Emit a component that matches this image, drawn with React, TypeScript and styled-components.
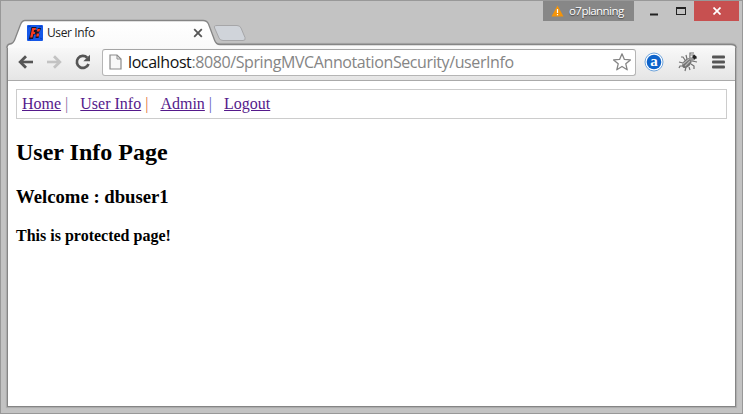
import React from "react";
import styled, { createGlobalStyle } from "styled-components";

const GlobalStyle = createGlobalStyle`
  * { box-sizing: border-box; }
  html, body { margin: 0; overflow: hidden; }
`;

const Window = styled.div`
  width: 743px;
  height: 414px;
  display: flex;
  flex-direction: column;
  background: #c3c3c3;
  border: 1px solid #989898;
  padding: 0 6px 6px;
  font-family: "Open Sans", "Noto Sans", sans-serif;
`;

const TitleBar = styled.header`
  position: relative;
  height: 43px;
  flex: none;
  display: flex;
  justify-content: space-between;
`;

const TabShape = styled.svg`
  position: absolute;
  left: 0;
  top: 0;
  overflow: visible;
`;

const Tab = styled.div`
  position: relative;
  display: flex;
  align-items: center;
  width: 196px;
  height: 22px;
  margin-top: 21px;
  padding-left: 20px;
`;

const TabTitle = styled.span`
  flex: 1;
  margin-left: 4px;
  font-size: 12px;
  line-height: 16px;
  letter-spacing: -0.38px;
  color: #222;
`;

const Controls = styled.div`
  position: relative;
  display: flex;
  height: 20px;
  margin-right: -3px;
`;

const Profile = styled.div`
  width: 91px;
  display: flex;
  align-items: center;
  padding-left: 8px;
  gap: 5px;
  background: #878787;
  color: #fff;
  font-size: 11.5px;
  line-height: 18px;
  letter-spacing: -0.55px;
  text-shadow: 0 1px 1px #444;
`;

const WindowButton = styled.button<{ $width: number; $close?: boolean }>`
  width: ${(p) => p.$width}px;
  height: 20px;
  padding: 0;
  border: 0;
  margin-left: ${(p) => (p.$close ? 6 : 0)}px;
  background: ${(p) => (p.$close ? "#c75050" : "transparent")};
  display: flex;
  align-items: center;
  justify-content: center;
`;

const Frame = styled.main`
  flex: 1;
  min-height: 0;
  display: flex;
  flex-direction: column;
  border: 1px solid #858585;
  border-top: 0;
  border-radius: 4px 4px 0 0;
  box-shadow: 0 0 1px 1px #aaa;
  background: #fff;
`;

const Toolbar = styled.nav`
  height: 37px;
  flex: none;
  display: flex;
  align-items: center;
  padding: 0 10px 0 10px;
  border-radius: 3px 3px 0 0;
  border-bottom: 1px solid #aaa;
  background: linear-gradient(#fafafa, #e5e5e5);
`;

const NavIcons = styled.div`
  width: 84px;
  height: 20px;
  display: flex;
  gap: 12px;
`;

const AddressBar = styled.div`
  width: 534px;
  height: 27px;
  display: flex;
  align-items: center;
  padding: 0 3px 0 6px;
  border: 1px solid #b5b5b5;
  border-top-color: #a5a5a5;
  border-radius: 3px;
  background: #fff;
`;

const Url = styled.span`
  flex: 1;
  margin-left: 6px;
  font-size: 16px;
  line-height: 22px;
  letter-spacing: -0.4px;
  white-space: nowrap;
  color: #858585;
`;

const Host = styled.span`
  color: #111;
`;

const Extensions = styled.div`
  flex: 1;
  display: flex;
  align-items: center;
  justify-content: space-between;
  margin-left: 8px;
`;

const Page = styled.article`
  padding: 8px;
  font-family: "Liberation Serif", "Times New Roman", serif;
  font-size: 16px;
  color: #000;
`;

const Menu = styled.div`
  height: 30px;
  border: 1px solid #ccc;
  padding: 5px;
  line-height: 18px;
  white-space: pre;
`;

const MenuLink = styled.a`
  color: #551a8b;
  text-decoration: underline;
`;

const Separator = styled.span<{ $color: string }>`
  color: ${(p) => p.$color};
`;

const Title = styled.h2`
  margin: 19.9px 0;
  font-size: 24px;
  line-height: 27px;
`;

const Welcome = styled.h3`
  margin: 0 0 20.6px;
  font-size: 18.72px;
  line-height: 21px;
`;

const Notice = styled.h4`
  margin: 0;
  font-size: 16px;
  line-height: 18px;
`;

const BackArrow = ({ color }: { color: string }) => (
  <svg width="16" height="20" viewBox="0 0 16 20" fill="none" stroke={color}>
    <path d="M2.5 10H15" strokeWidth="2.6" />
    <path d="M8 4.2L2.2 10L8 15.8" strokeWidth="2.8" />
  </svg>
);

const ForwardArrow = ({ color }: { color: string }) => (
  <svg width="16" height="20" viewBox="0 0 16 20" fill="none" stroke={color}>
    <path d="M1 10H13.5" strokeWidth="2.6" />
    <path d="M8 4.2L13.8 10L8 15.8" strokeWidth="2.8" />
  </svg>
);

const Reload = () => (
  <svg width="18" height="20" viewBox="0 0 18 20">
    <path d="M13.2 5.8A6 6 0 1 0 14.5 12" fill="none" stroke="#555" strokeWidth="2.7" />
    <path d="M16 2.8V9.2H9.3Z" fill="#555" />
  </svg>
);

const Favicon = () => (
  <svg width="16" height="16" viewBox="0 0 16 16">
    <rect width="16" height="16" rx="1" fill="#1558e8" />
    <path d="M1 2L4 1M12 2L15 1M1 14L4 15M13 13L15 14" stroke="#0a3dc0" />
    <path d="M4.5 2H9.5L9 5H10L11 3H14L13 6L11.5 8L12.5 9L11.5 13H8.5L9 9.5H7L6 14H2L3 9Z" fill="#101528" />
    <path d="M5.2 3H7.6L5.5 12.5H3.1Z M7 3H9L8.7 5H6.7Z M6 7H8.2L7.8 9H5.8Z M10.3 4H13L12.5 6.6H9.7Z M9.8 8.5H12.3L11.7 11.5H9.1Z" fill="#f53a20" />
  </svg>
);

const PageIcon = () => (
  <svg width="13" height="16" viewBox="0 0 13 16" fill="#f8f8f8" stroke="#8b8b8b">
    <path d="M1 1H8L12 5V15H1Z" strokeWidth="1.2" />
    <path d="M8 1V5H12" fill="none" />
  </svg>
);

const Star = () => (
  <svg width="20" height="20" viewBox="0 0 20 20">
    <path
      d="M10 1.8L12.4 7.4L18.4 7.9L13.8 11.8L15.2 17.8L10 14.5L4.8 17.8L6.2 11.8L1.6 7.9L7.6 7.4Z"
      fill="#fff" stroke="#858585" strokeWidth="1.3" strokeLinejoin="round"
    />
  </svg>
);

const LetterBadge = () => (
  <svg width="20" height="20" viewBox="0 0 20 20">
    <circle cx="10" cy="10" r="9" fill="#fff" stroke="#609bd8" strokeWidth="0.9" />
    <circle cx="10" cy="10" r="7.3" fill="#0d63cb" />
    <text x="10" y="14" textAnchor="middle" fill="#fff" fontFamily="Liberation Serif" fontWeight="bold" fontSize="15">a</text>
  </svg>
);

const Bug = () => (
  <svg width="21" height="20" viewBox="0 0 21 20">
    <g fill="none" stroke="#707070" strokeWidth="1.2">
      <path d="M7 8L5 5L3 5M5 11L1 10M6 14L2 14L1 16M8 15L7 19M11 15L12 18M13 12L16 14L16 17M9 7L8 3M14 9L19 10M12 5L12 1H16M15 7L19 6" />
    </g>
    <ellipse cx="9" cy="11" rx="3.6" ry="6" transform="rotate(42 9 11)" fill="#727272" />
    <path d="M5 12L11 7M7 14L12 9" stroke="#b5b5b5" strokeWidth="1.1" />
    <circle cx="14.3" cy="5.6" r="3.3" fill="#999" />
    <path d="M16 2.5L19 5L16.5 7.5L14 5Z" fill="#222" />
    <circle cx="13.5" cy="4.5" r="1" fill="#eee" />
  </svg>
);

const MenuIcon = () => (
  <svg width="13" height="14" viewBox="0 0 13 14" fill="#555">
    <rect y="0.5" width="13" height="3" rx="1" />
    <rect y="5.5" width="13" height="3" rx="1" />
    <rect y="10.5" width="13" height="3" rx="1" />
  </svg>
);

export default function App() {
  return (
    <>
      <GlobalStyle />
      <Window>
        <TitleBar>
          <TabShape width="729" height="46" viewBox="7 1 729 46">
            <defs>
              <linearGradient id="tab" x1="0" y1="0" x2="0" y2="1">
                <stop offset="0" stopColor="#fff" />
                <stop offset="1" stopColor="#fafafa" />
              </linearGradient>
            </defs>
            <path
              d="M7 48Q7 44.5 10 44Q13.5 43.5 15 39L20.3 25Q22 20.5 25 20.5H203Q207 20.5 208.5 24L214.5 40Q216 44.5 220 44.5H731Q736 44.5 736 48"
              fill="url(#tab)" stroke="#858585" strokeWidth="1.3"
            />
            <path
              d="M217 25.5H237Q240 25.5 241 28L245 37.5Q246 40.5 243 40.5H223Q220 40.5 219 38L214.6 28Q213.5 25.5 217 25.5Z"
              fill="#d0d4da" stroke="#a6a6a8"
            />
          </TabShape>
          <Tab>
            <Favicon />
            <TabTitle>User Info</TabTitle>
            <svg width="10" height="10" viewBox="0 0 10 10" stroke="#555" strokeWidth="1.8">
              <path d="M1.2 1.2L8.8 8.8M8.8 1.2L1.2 8.8" />
            </svg>
          </Tab>
          <Controls>
            <Profile>
              <svg width="13" height="12" viewBox="0 0 13 12">
                <path d="M6.5 .5L12.5 11.5H.5Z" fill="#f49409" />
                <path d="M6.5 4V8M6.5 9V10.3" stroke="#fff" strokeWidth="1.2" />
              </svg>
              o7planning
            </Profile>
            <WindowButton $width={40} aria-label="Minimize">
              <svg width="8" height="10" viewBox="0 0 8 10"><path d="M0 8.5H8" stroke="#222" strokeWidth="2" /></svg>
            </WindowButton>
            <WindowButton $width={14} aria-label="Maximize">
              <svg width="10" height="8" viewBox="0 0 10 8">
                <path d="M.5 0V8M9.5 0V8M0 7.5H10" fill="none" stroke="#222" />
                <path d="M0 1H10" stroke="#222" strokeWidth="2" />
              </svg>
            </WindowButton>
            <WindowButton $width={45} $close aria-label="Close">
              <svg width="8" height="8" viewBox="0 0 8 8" stroke="#fff" strokeWidth="1.7"><path d="M.5 .5L7.5 7.5M7.5 .5L.5 7.5" /></svg>
            </WindowButton>
          </Controls>
        </TitleBar>
        <Frame>
          <Toolbar>
            <NavIcons>
              <BackArrow color="#555" />
              <ForwardArrow color="#c3c3c3" />
              <Reload />
            </NavIcons>
            <AddressBar>
              <PageIcon />
              <Url><Host>localhost</Host>:8080/SpringMVCAnnotationSecurity/userInfo</Url>
              <Star />
            </AddressBar>
            <Extensions>
              <LetterBadge />
              <Bug />
              <MenuIcon />
            </Extensions>
          </Toolbar>
          <Page>
            <Menu>
              <MenuLink>Home</MenuLink><Separator $color="#8c72a2">{"\u00a0|\u00a0\u00a0\u00a0"}</Separator>
              <MenuLink>User Info</MenuLink><Separator $color="#e2703c">{"\u00a0|\u00a0\u00a0\u00a0"}</Separator>
              <MenuLink>Admin</MenuLink><Separator $color="#625dbb">{"\u00a0|\u00a0\u00a0\u00a0"}</Separator>
              <MenuLink>Logout</MenuLink>
            </Menu>
            <Title>User Info Page</Title>
            <Welcome>Welcome : dbuser1</Welcome>
            <Notice>This is protected page!</Notice>
          </Page>
        </Frame>
      </Window>
    </>
  );
}
